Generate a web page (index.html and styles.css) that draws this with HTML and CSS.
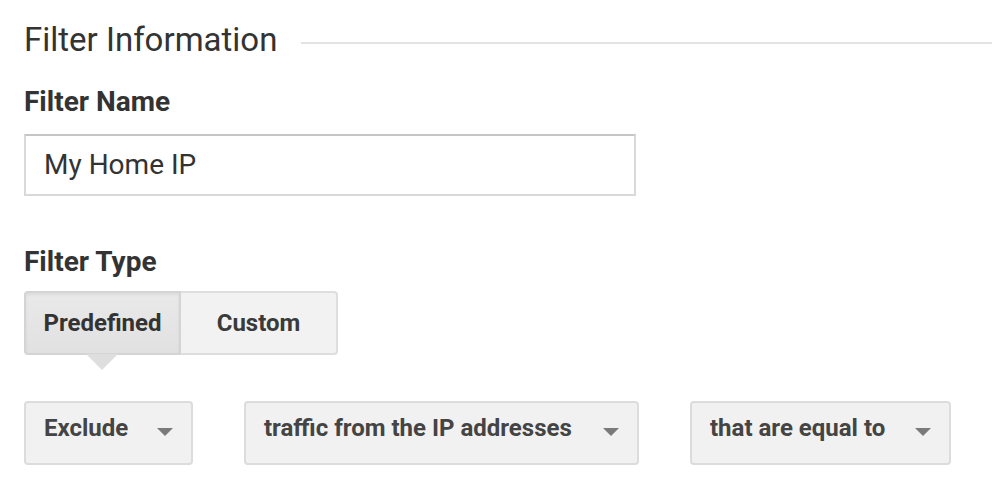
FILE: index.html
```html
<!DOCTYPE html>
<html>
<head>
<meta charset="utf-8">
<link rel="stylesheet" href="styles.css">
</head>
<body>
<div class="page">
  <div class="section-head">
    <h2 class="section-title">Filter Information</h2>
    <div class="section-rule"></div>
  </div>

  <div class="field">
    <div class="label">Filter Name</div>
    <div class="text-input">My Home IP</div>
  </div>

  <div class="field type-field">
    <div class="label">Filter Type</div>
    <div class="toggle">
      <div class="toggle-btn active">Predefined<span class="pointer"></span></div>
      <div class="toggle-btn">Custom</div>
    </div>
  </div>

  <div class="selects">
    <div class="select sel-exclude"><span>Exclude</span><span class="caret"></span></div>
    <div class="select sel-traffic"><span>traffic from the IP addresses</span><span class="caret"></span></div>
    <div class="select sel-equal"><span>that are equal to</span><span class="caret"></span></div>
  </div>
</div>
</body>
</html>
```

FILE: styles.css
```css
html, body {
  margin: 0;
  padding: 0;
  background: #ffffff;
}

body {
  font-family: Roboto, "Liberation Sans", Arial, sans-serif;
  color: #333333;
}

.page {
  padding: 20px 0 0 24px;
  overflow: hidden;
}

.section-head {
  display: flex;
  align-items: center;
  height: 40px;
}

.section-title {
  margin: 0;
  font-size: 33px;
  font-weight: 400;
  line-height: 40px;
  color: #333333;
  white-space: nowrap;
}

.section-rule {
  flex: 1;
  height: 2px;
  background: #e3e3e3;
  margin-left: 24px;
  margin-top: 6px;
}

.field {
  margin-top: 26px;
}

.label {
  font-size: 28px;
  font-weight: 700;
  line-height: 32px;
  color: #333333;
}

.text-input {
  margin-top: 16px;
  box-sizing: border-box;
  width: 612px;
  height: 62px;
  border: 2px solid #d9d9d9;
  border-top-color: #c6c6c6;
  padding: 0 18px;
  font-size: 28px;
  line-height: 58px;
  color: #333333;
}

.type-field {
  margin-top: 50px;
}

.toggle {
  margin-top: 13px;
  display: inline-grid;
  grid-template-columns: 157px 157px;
  height: 64px;
}

.toggle-btn {
  position: relative;
  display: flex;
  align-items: center;
  justify-content: center;
  box-sizing: border-box;
  font-size: 24px;
  font-weight: 700;
  color: #3a3a3a;
  background: #f2f2f2;
  border: 2px solid #dedede;
  border-left: none;
  border-radius: 0 4px 4px 0;
}

.toggle-btn.active {
  background: linear-gradient(#e9e9e9, #e1e1e1);
  border: 2px solid #d4d4d4;
  border-radius: 4px 0 0 4px;
  box-shadow: inset 0 2px 3px rgba(0, 0, 0, 0.06);
  color: #333333;
}

.pointer {
  position: absolute;
  left: 60px;
  bottom: -17px;
  width: 0;
  height: 0;
  border-left: 16px solid transparent;
  border-right: 16px solid transparent;
  border-top: 16px solid #dedede;
}

.selects {
  display: flex;
  gap: 51px;
  margin-top: 46px;
}

.select {
  box-sizing: border-box;
  height: 64px;
  display: flex;
  align-items: flex-start;
  justify-content: space-between;
  padding: 11px 18px 0 18px;
  background: #f1f1f1;
  border: 2px solid #dcdcdc;
  border-radius: 4px;
  font-size: 24px;
  font-weight: 700;
  line-height: 28px;
  color: #444444;
  white-space: nowrap;
}

.sel-exclude { width: 169px; }
.sel-traffic { width: 395px; }
.sel-equal { width: 261px; }

.caret {
  width: 0;
  height: 0;
  margin-top: 14px;
  border-left: 8px solid transparent;
  border-right: 8px solid transparent;
  border-top: 8px solid #7a7a7a;
}
```
